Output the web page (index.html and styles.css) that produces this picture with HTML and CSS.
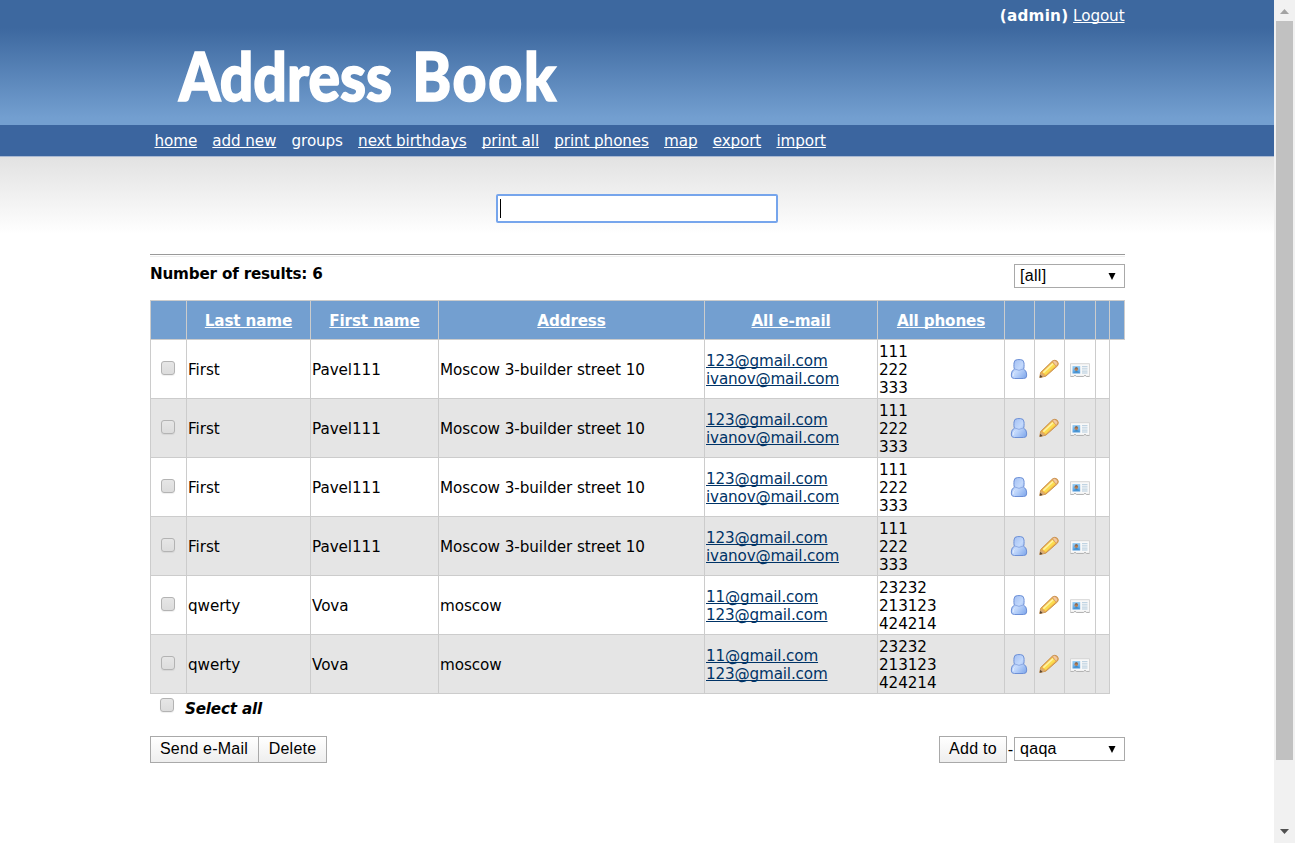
FILE: index.html
```html
<!DOCTYPE html>
<html lang="en">
<head>
<meta charset="utf-8">
<title>Address Book</title>
<link rel="stylesheet" href="styles.css">
</head>
<body>
<svg class="defs" width="0" height="0">
  <defs>
    <linearGradient id="blue" x1="0" x2="1" y1="0" y2="1"><stop offset="0" stop-color="#9dbaf0"/><stop offset=".5" stop-color="#c3d9fc"/><stop offset="1" stop-color="#7ba4ea"/></linearGradient>
    <linearGradient id="photo" x2="0" y2="1"><stop offset="0" stop-color="#9bd0f5"/><stop offset="1" stop-color="#4d9be0"/></linearGradient>
    <symbol id="person" viewBox="0 0 20 20">
      <path d="M5.500 10.200C4.700 9 4.900 6 5 4Q5.200 .6 8.500 .6H11.500Q14.800 .6 15 4C15.100 6 15.300 9 14.500 10.200Q17.600 11.500 17.600 15V17Q17.600 19.500 14.500 19.500H5.500Q2.400 19.500 2.400 17V15Q2.400 11.500 5.500 10.200Z" fill="url(#blue)" stroke="#6c8fd6" stroke-width="1"/>
      <path d="M5.700 10Q10 12.700 14.300 10" fill="none" stroke="#8fabe4" stroke-width="1"/>
      <path d="M6 12.500Q4.200 13.500 4.200 17" fill="none" stroke="#dfebff" stroke-width="1"/>
    </symbol>
    <symbol id="pencil" viewBox="0 0 20 20">
      <path d="M.8 18.500L1.600 13.500L13.500 2Q16 .3 18.300 2.300Q20.200 4.500 18.600 6.800L6.800 17.200Z" fill="#eeb04a" stroke="#c99452" stroke-width="1"/>
      <path d="M3.600 13.200L13.400 3.800L16.600 6.800L6.600 16Z" fill="#fbdc4e"/>
      <path d="M4.300 13.700L14 4.600" stroke="#fff3a0" stroke-width="1.600"/>
      <path d="M13.400 2.500L15.200 1.500Q17.500 1.500 18.700 4.200L18 6.500L17 7.200Z" fill="#f3c9a0" stroke="#c78a50" stroke-width=".5"/>
      <path d="M1.800 13.700L6.400 17L.8 18.600Z" fill="#d9ad76"/>
      <path d="M1.300 15.800L3.700 17.900L.6 18.800Z" fill="#5d4937"/>
    </symbol>
    <symbol id="card" viewBox="0 0 20 15">
      <path d="M.5 .7H19.500V13.300H16.500L15 12.100L13.500 13.300H6.500L5 12.100L3.500 13.300H.5Z" fill="#f8f8f8" stroke="#d6d6d6"/>
      <path d="M.5 13.500H3.500L5 12.300L6.500 13.500H13.500L15 12.300L16.500 13.500H19.500" fill="none" stroke="#b4b4b4"/>
      <rect x="2.500" y="3" width="7.700" height="7.500" fill="url(#photo)"/>
      <path d="M3.800 9.500Q4.500 8 6.500 8Q8.500 8 9.200 9.500Z" fill="#4187be"/>
      <circle cx="6.300" cy="6.200" r="1.700" fill="#b77d50"/>
      <path d="M4.600 5.500Q6.300 3 8.200 5.500Z" fill="#75584a"/>
      <path d="M12 3.700H17.500M12 5.900H17.500M12 8.100H17.500M12 10H17.500" stroke="#b2cbdd"/>
    </symbol>
  </defs>
</svg>
<div class="window">
  <div class="page">
    <header class="header">
      <div class="wrap">
        <div class="user"><b>(admin)</b> <a href="#">Logout</a></div>
        <svg class="logo" width="400" height="70" viewBox="0 0 400 70">
          <text x="1" y="56" textLength="379" lengthAdjust="spacingAndGlyphs">Address <tspan class="wide">Book</tspan></text>
        </svg>
      </div>
    </header>
    <nav class="nav"><div class="wrap links">
      <a href="#">home</a><a href="#">add new</a><a class="plain">groups</a><a href="#">next birthdays</a><a href="#">print all</a><a href="#">print phones</a><a href="#">map</a><a href="#">export</a><a href="#">import</a>
    </div></nav>
    <main class="content"><div class="wrap">
      <div class="search"><div class="field"><span class="caret"></span></div></div>
      <div class="rule"></div>
      <div class="summary"><b>Number of results: 6</b><div class="select">[all]<svg width="8" height="8"><path d="M.5 1H7.500L4 8Z"/></svg></div></div>
      <table class="contacts">
        <colgroup><col class="c1"><col class="c2"><col class="c3"><col class="c4"><col class="c5"><col class="c6"><col class="c7"><col class="c7"><col class="c8"><col class="c9"><col class="c10"></colgroup>
        <tr class="head"><th></th><th><a href="#">Last name</a></th><th><a href="#">First name</a></th><th><a href="#">Address</a></th><th><a href="#">All e-mail</a></th><th><a href="#">All phones</a></th><th></th><th></th><th></th><th></th><th></th></tr>
        <tr><td class="pick"><i class="check"></i></td><td>First</td><td>Pavel111</td><td>Moscow 3-builder street 10</td><td><a href="#">123@gmail.com</a><br><a href="#">ivanov@mail.com</a></td><td>111<br>222<br>333</td><td class="icon"><svg class="person"><use href="#person"/></svg></td><td class="icon"><svg class="pencil"><use href="#pencil"/></svg></td><td class="icon"><svg class="card"><use href="#card"/></svg></td><td></td></tr>
        <tr class="odd"><td class="pick"><i class="check"></i></td><td>First</td><td>Pavel111</td><td>Moscow 3-builder street 10</td><td><a href="#">123@gmail.com</a><br><a href="#">ivanov@mail.com</a></td><td>111<br>222<br>333</td><td class="icon"><svg class="person"><use href="#person"/></svg></td><td class="icon"><svg class="pencil"><use href="#pencil"/></svg></td><td class="icon"><svg class="card"><use href="#card"/></svg></td><td></td></tr>
        <tr><td class="pick"><i class="check"></i></td><td>First</td><td>Pavel111</td><td>Moscow 3-builder street 10</td><td><a href="#">123@gmail.com</a><br><a href="#">ivanov@mail.com</a></td><td>111<br>222<br>333</td><td class="icon"><svg class="person"><use href="#person"/></svg></td><td class="icon"><svg class="pencil"><use href="#pencil"/></svg></td><td class="icon"><svg class="card"><use href="#card"/></svg></td><td></td></tr>
        <tr class="odd"><td class="pick"><i class="check"></i></td><td>First</td><td>Pavel111</td><td>Moscow 3-builder street 10</td><td><a href="#">123@gmail.com</a><br><a href="#">ivanov@mail.com</a></td><td>111<br>222<br>333</td><td class="icon"><svg class="person"><use href="#person"/></svg></td><td class="icon"><svg class="pencil"><use href="#pencil"/></svg></td><td class="icon"><svg class="card"><use href="#card"/></svg></td><td></td></tr>
        <tr><td class="pick"><i class="check"></i></td><td>qwerty</td><td>Vova</td><td>moscow</td><td><a href="#">11@gmail.com</a><br><a href="#">123@gmail.com</a></td><td>23232<br>213123<br>424214</td><td class="icon"><svg class="person"><use href="#person"/></svg></td><td class="icon"><svg class="pencil"><use href="#pencil"/></svg></td><td class="icon"><svg class="card"><use href="#card"/></svg></td><td></td></tr>
        <tr class="odd"><td class="pick"><i class="check"></i></td><td>qwerty</td><td>Vova</td><td>moscow</td><td><a href="#">11@gmail.com</a><br><a href="#">123@gmail.com</a></td><td>23232<br>213123<br>424214</td><td class="icon"><svg class="person"><use href="#person"/></svg></td><td class="icon"><svg class="pencil"><use href="#pencil"/></svg></td><td class="icon"><svg class="card"><use href="#card"/></svg></td><td></td></tr>
      </table>
      <div class="all"><i class="check"></i><b>Select all</b></div>
      <div class="actions"><div class="button send">Send e-Mail</div><div class="button delete">Delete</div><div class="button add">Add to</div><span class="dash">-</span><div class="select">qaqa<svg width="8" height="8"><path d="M.5 1H7.500L4 8Z"/></svg></div></div>
    </div></main>
  </div>
  <div class="scrollbar"><svg width="9" height="5"><path d="M0 5L4.500 0L9 5Z" fill="#a3a3a3"/></svg><div class="thumb"></div><svg width="9" height="5"><path d="M0 0H9L4.500 5Z" fill="#505050"/></svg></div>
</div>
</body>
</html>
```
FILE: styles.css
```css
* { box-sizing: border-box; }
body { margin: 0; background: #fff; color: #000; font: 15.2px/18px Verdana, "DejaVu Sans", sans-serif; overflow: hidden; }
a { color: inherit; text-decoration: underline; text-decoration-thickness: 1px; text-underline-offset: 1px; text-decoration-skip-ink: none; }
.defs { position: absolute; }
.window { display: flex; width: 1295px; height: 843px; }
.page { width: 1274px; }
.wrap { width: 975px; margin-left: 150px; }
.header { height: 125px; color: #fff; background: linear-gradient(#3d689f 0, #3d689f 28px, #739fd0 118px, #739fd0 125px); }
.user { height: 45px; padding: 7px .5px 0 0; text-align: right; letter-spacing: -.1px; }
.user b { letter-spacing: .25px; }
.logo { display: block; margin-left: 28px; overflow: visible; }
.logo text { font: 900 67px Lato, sans-serif; fill: #fff; stroke: #fff; stroke-width: 1.6px; word-spacing: 7px; }
.logo .wide { letter-spacing: 2px; }
.nav { height: 31px; color: #fff; background: #3b659f; }
.links { display: flex; gap: 15.2px; padding: 7px 0 0 4.500px; letter-spacing: -.11px; }
.links .plain { text-decoration: none; }
.content { height: 687px; padding-top: 38px; background: linear-gradient(#a9b9d3 0, #a9b9d3 1px, #e2e2e2 1px, #fff 78px); }
.search { display: flex; justify-content: center; }
.field { width: 282px; height: 29px; padding: 3px 4px; margin-right: 2px; background: #fff; border: 2px solid #76a5ec; border-radius: 2px; }
.caret { display: block; width: 1px; height: 19px; margin-left: -2px; background: #000; }
.rule { height: 3px; margin-top: 31px; border-top: 1px solid #9a9a9a; border-bottom: 1px solid #eee; }
.summary { display: flex; justify-content: space-between; padding-top: 7px; height: 43px; }
.summary b { padding-top: 1px; letter-spacing: -.2px; }
.select { display: flex; justify-content: space-between; align-items: center; width: 111px; height: 24px; padding: 0 8px 0 5px; border: 1px solid #a9a9a9; background: #fff; font: 16px/22px Arial, "Liberation Sans", sans-serif; letter-spacing: .3px; }
.contacts { width: 975px; table-layout: fixed; border-collapse: collapse; }
.c1 { width: 36px; } .c2 { width: 124px; } .c3 { width: 128px; } .c4 { width: 266px; } .c5 { width: 173px; }
.c6 { width: 127px; } .c7 { width: 30px; } .c8 { width: 31px; } .c9 { width: 14px; } .c10 { width: 15px; }
.contacts tr { height: 59px; }
.contacts .head { height: 39px; color: #fff; background: #739fd0; letter-spacing: -.15px; }
.contacts th, .contacts td { padding: 1px; border: 1px solid #ccc; white-space: nowrap; }
.contacts .head th { padding-top: 3px; }
.contacts td { padding-top: 2px; letter-spacing: -.07px; }
.contacts td a { color: #036; letter-spacing: -.16px; }
.odd td { background: #e5e5e5; }
.contacts .pick, .contacts .icon { padding: 0; }
.check { display: block; width: 14px; height: 14px; border: 1px solid #b3b3b3; border-radius: 3px; background: linear-gradient(#e6e6e6, #dcdcdc); box-shadow: 0 1px 1px #0001; }
.pick .check { margin: 0 0 3px 10px; }
.icon svg { display: block; margin: 0 0 1px 4px; }
.person, .pencil { width: 20px; height: 20px; }
.card { width: 20px; height: 15px; }
.contacts .card { margin: 2px 0 0 5px; }
.all { display: flex; gap: 11px; height: 42px; padding: 4px 0 0 10px; font-style: italic; letter-spacing: -.2px; }
.all b { padding-top: 2px; }
.actions { display: flex; align-items: flex-start; }
.button { height: 27px; border: 1px solid #a9a9a9; background: linear-gradient(#fff, #eee); font: 16px/23px Arial, "Liberation Sans", sans-serif; text-align: center; letter-spacing: .25px; }
.send { width: 109px; padding-right: 1px; } .delete { width: 69px; margin-left: -1px; } .add { width: 68px; margin-left: auto; }
.dash { width: 7px; padding-top: 5px; text-align: center; }
.actions .select { margin-top: 1px; }
.scrollbar { display: flex; flex-direction: column; align-items: center; width: 21px; padding: 9px 0 9px; background: #f1f1f1; }
.thumb { width: 17px; height: 739px; margin: 7px 0 auto; background: #c1c1c1; }
```
